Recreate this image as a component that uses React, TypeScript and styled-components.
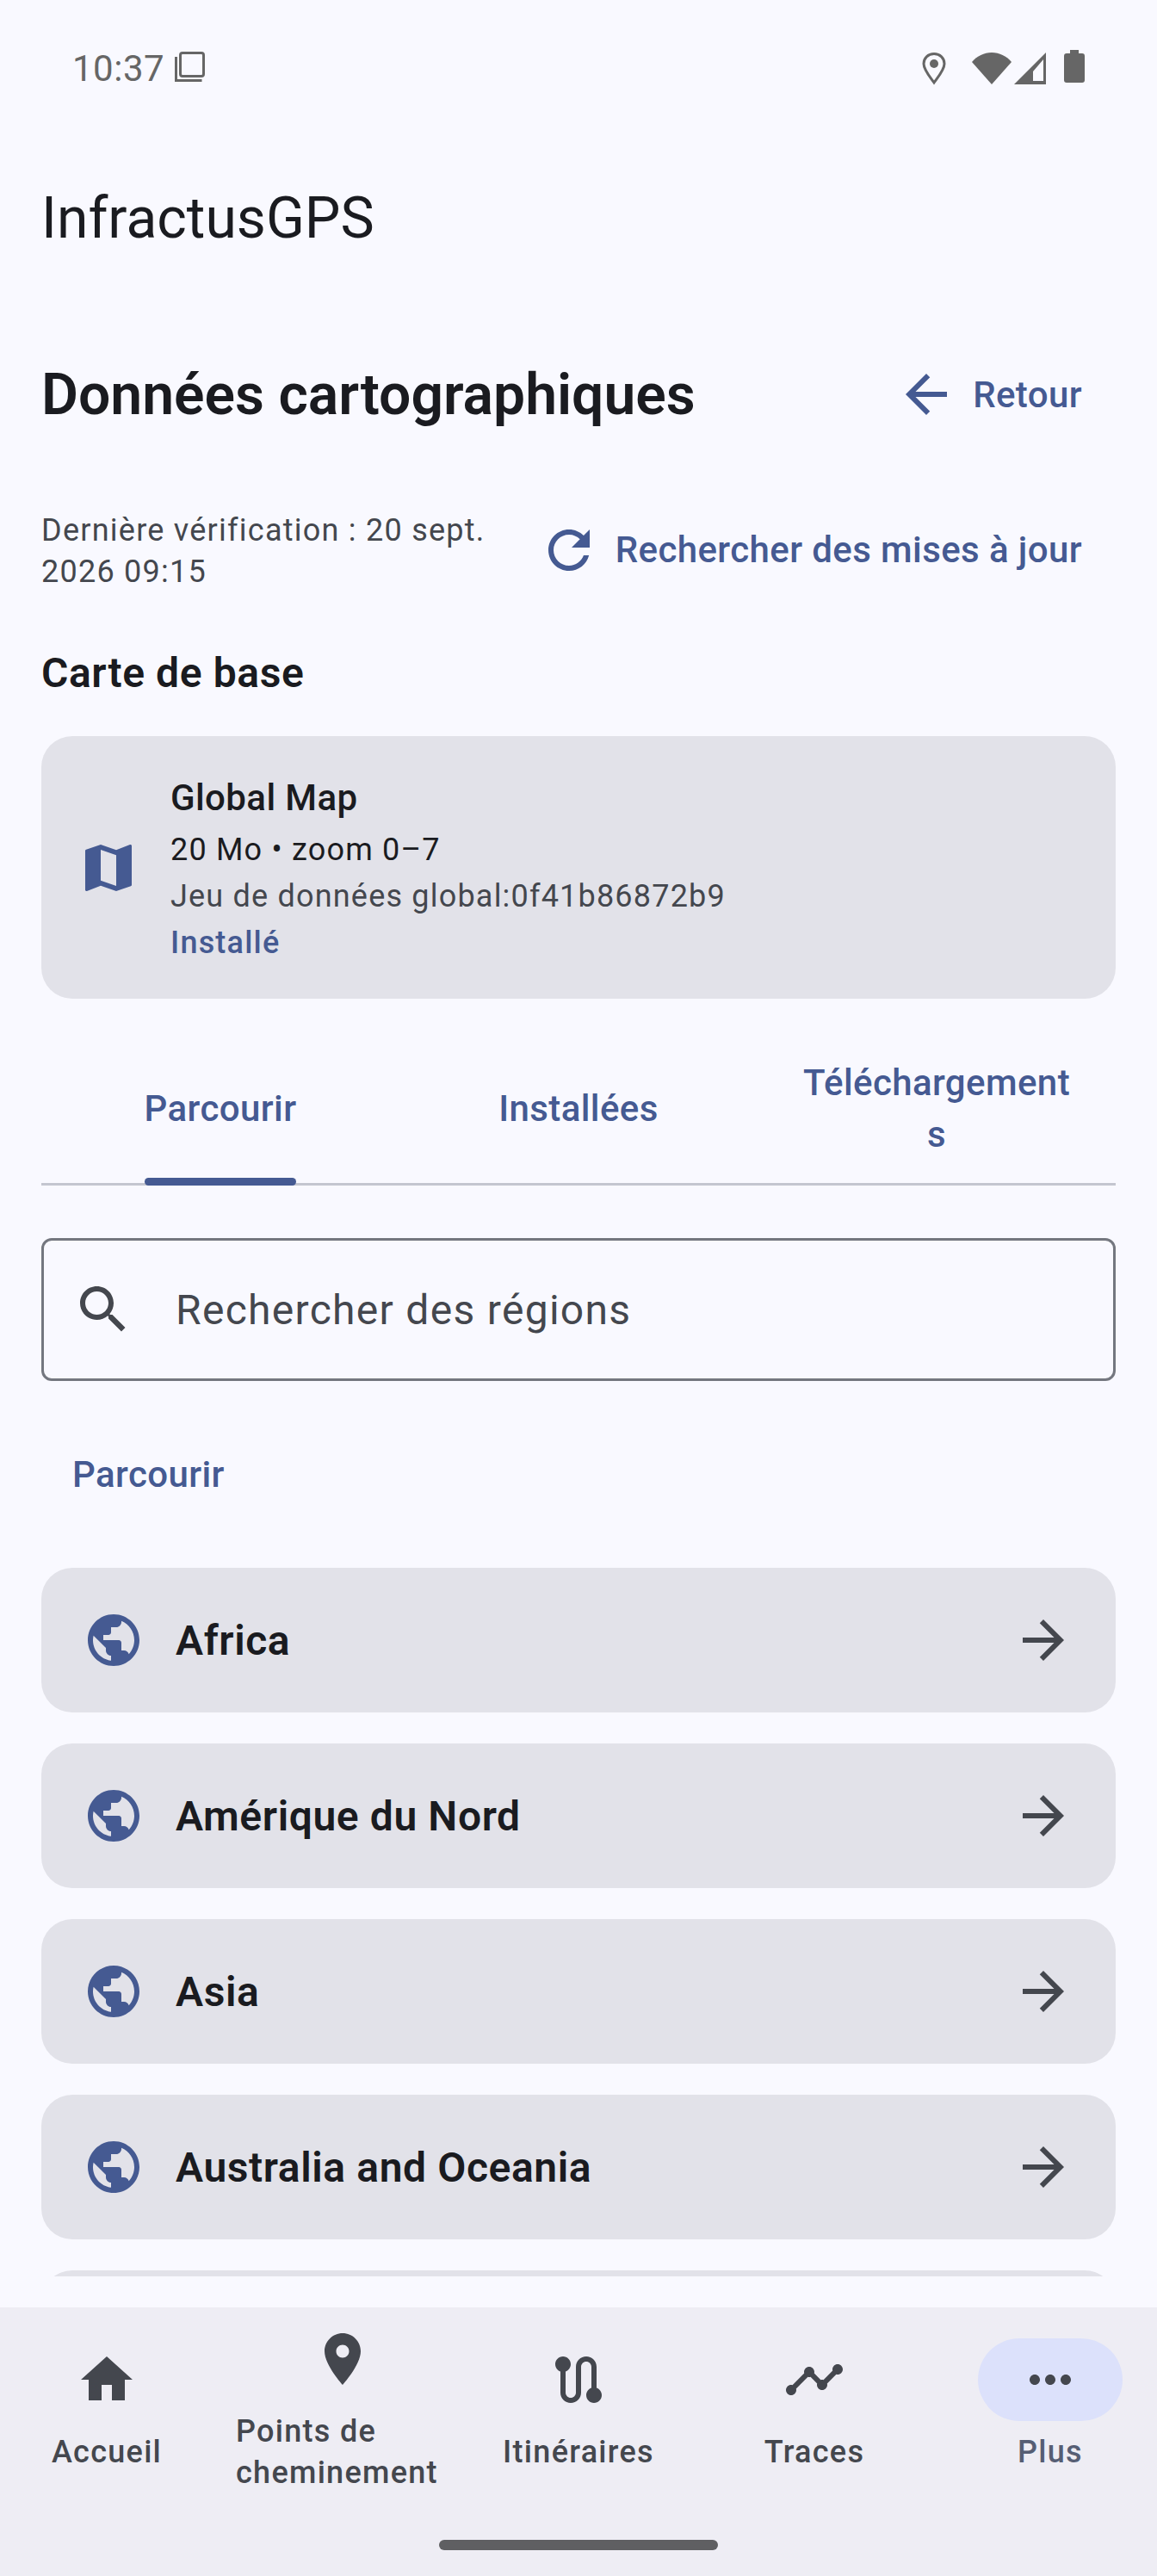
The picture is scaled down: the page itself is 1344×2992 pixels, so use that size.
import React from "react";
import styled, { createGlobalStyle } from "styled-components";

const PRIMARY = "#455a92";
const TEXT = "#1a1b20";
const MUTED = "#44474e";

const GlobalStyle = createGlobalStyle`
  html, body {
    margin: 0;
    padding: 0;
    background: #f9f9ff;
  }
  * {
    box-sizing: border-box;
  }
`;

const paths = {
  home: "M10 20v-6h4v6h5v-8h3L12 3 2 12h3v8z",
  place:
    "M12 2C8.13 2 5 5.13 5 9c0 5.25 7 13 7 13s7-7.75 7-13c0-3.87-3.13-7-7-7zm0 9.5c-1.38 0-2.5-1.12-2.5-2.5s1.12-2.5 2.5-2.5 2.5 1.12 2.5 2.5-1.12 2.5-2.5 2.5z",
  route:
    "M19 15.18V7c0-2.21-1.79-4-4-4s-4 1.79-4 4v10c0 1.1-.9 2-2 2s-2-.9-2-2V8.82C8.16 8.4 9 7.3 9 6c0-1.66-1.34-3-3-3S3 4.34 3 6c0 1.3.84 2.4 2 2.82V17c0 2.21 1.79 4 4 4s4-1.79 4-4V7c0-1.1.9-2 2-2s2 .9 2 2v8.18c-1.16.41-2 1.51-2 2.82 0 1.66 1.34 3 3 3s3-1.34 3-3c0-1.3-.84-2.4-2-2.82z",
  timeline:
    "M23 8c0 1.1-.9 2-2 2-.18 0-.35-.02-.51-.07l-3.56 3.55c.05.16.07.34.07.52 0 1.1-.9 2-2 2s-2-.9-2-2c0-.18.02-.36.07-.52l-2.55-2.55c-.16.05-.34.07-.52.07s-.36-.02-.52-.07l-4.55 4.56c.05.16.07.33.07.51 0 1.1-.9 2-2 2s-2-.9-2-2 .9-2 2-2c.18 0 .35.02.51.07l4.56-4.55C8.02 9.36 8 9.18 8 9c0-1.1.9-2 2-2s2 .9 2 2c0 .18-.02.36-.07.52l2.55 2.55c.16-.05.34-.07.52-.07s.36.02.52.07l3.55-3.56C19.02 8.35 19 8.18 19 8c0-1.1.9-2 2-2s2 .9 2 2z",
  more:
    "M6 10c-1.1 0-2 .9-2 2s.9 2 2 2 2-.9 2-2-.9-2-2-2zm12 0c-1.1 0-2 .9-2 2s.9 2 2 2 2-.9 2-2-.9-2-2-2zm-6 0c-1.1 0-2 .9-2 2s.9 2 2 2 2-.9 2-2-.9-2-2-2z",
  globe:
    "M12 2C6.48 2 2 6.48 2 12s4.48 10 10 10 10-4.48 10-10S17.52 2 12 2zm-1 17.93c-3.95-.49-7-3.85-7-7.93 0-.62.08-1.21.21-1.79L9 15v1c0 1.1.9 2 2 2v1.93zm6.9-2.54c-.26-.81-1-1.39-1.9-1.39h-1v-3c0-.55-.45-1-1-1H8v-2h2c.55 0 1-.45 1-1V7h2c1.1 0 2-.9 2-2v-.41c2.93 1.19 5 4.06 5 7.41 0 2.08-.8 3.97-2.1 5.39z",
  map: "M20.5 3l-.16.03L15 5.1 9 3 3.36 4.9c-.21.07-.36.25-.36.48V20.5c0 .28.22.5.5.5l.16-.03L9 18.9l6 2.1 5.64-1.9c.21-.07.36-.25.36-.48V3.5c0-.28-.22-.5-.5-.5zM15 19l-6-2.11V5l6 2.11V19z",
  search:
    "M15.5 14h-.79l-.28-.27C15.41 12.59 16 11.11 16 9.5 16 5.91 13.09 3 9.5 3S3 5.91 3 9.5 5.91 16 9.5 16c1.61 0 3.09-.59 4.23-1.57l.27.28v.79l5 4.99L20.49 19l-4.99-5zm-6 0C7.01 14 5 11.99 5 9.5S7.01 5 9.5 5 14 7.01 14 9.5 11.99 14 9.5 14z",
  back: "M20 11H7.83l5.59-5.59L12 4l-8 8 8 8 1.41-1.41L7.83 13H20v-2z",
  forward: "M12 4l-1.41 1.41L16.17 11H4v2h12.17l-5.58 5.59L12 20l8-8z",
  refresh:
    "M17.65 6.35C16.2 4.9 14.21 4 12 4c-4.42 0-7.99 3.58-7.99 8s3.57 8 7.99 8c3.73 0 6.84-2.55 7.73-6h-2.08c-.82 2.33-3.04 4-5.65 4-3.31 0-6-2.69-6-6s2.69-6 6-6c1.66 0 3.14.69 4.22 1.78L13 11h7V4l-2.35 2.35z",
};

const Icon = ({ name, size, color }: { name: keyof typeof paths; size: number; color: string }) => (
  <svg width={size} height={size} viewBox="0 0 24 24" fill={color} style={{ flexShrink: 0, display: "block" }}>
    <path d={paths[name]} />
  </svg>
);

const regions = ["Africa", "Amérique du Nord", "Asia", "Australia and Oceania"];

const navItems: { label: string; icon: keyof typeof paths; active?: boolean }[] = [
  { label: "Accueil", icon: "home" },
  { label: "Points de cheminement", icon: "place" },
  { label: "Itinéraires", icon: "route" },
  { label: "Traces", icon: "timeline" },
  { label: "Plus", icon: "more", active: true },
];

export default function App() {
  return (
    <Screen>
      <GlobalStyle />
      <StatusBar>
        <StatusLeft>
          <Clock>10:37</Clock>
          <svg width="42" height="42" viewBox="0 0 42 42" fill="none" stroke="#666" strokeWidth="3">
            <rect x="9.5" y="3.5" width="27" height="27" rx="2.5" />
            <path d="M4.5 8v27.5h30" />
          </svg>
        </StatusLeft>
        <StatusRight>
          <svg width="30" height="42" viewBox="0 0 30 42" fill="none">
            <path
              d="M15 4.500C8 4.500 3 9.500 3 16c0 7 7 15 12 22 5-7 12-15 12-22 0-6.500-5-11.500-12-11.500z"
              stroke="#666"
              strokeWidth="3"
            />
            <circle cx="15" cy="16" r="5" fill="#666" />
          </svg>
          <Wifi width="46" height="42" viewBox="0 0 46 42">
            <path d="M0 14C6 7 14 3 23 3s17 4 23 11L23 40z" fill="#666" />
          </Wifi>
          <Signal width="38" height="42" viewBox="0 0 38 42">
            <path fillRule="evenodd" d="M37 3v37H0zM22 25v11h12V11z" fill="#666" />
          </Signal>
          <Battery>
            <svg width="24" height="42" viewBox="0 0 24 42">
              <path d="M7 2h10v4h4a3 3 0 0 1 3 3v28a3 3 0 0 1-3 3H3a3 3 0 0 1-3-3V9a3 3 0 0 1 3-3h4z" fill="#666" />
            </svg>
          </Battery>
        </StatusRight>
      </StatusBar>
      <AppTitle>InfractusGPS</AppTitle>
      <Main>
        <Clip>
          <HeadingRow>
            <Heading>Données cartographiques</Heading>
            <TextAction>
              <Icon name="back" size={72} color={PRIMARY} />
              Retour
            </TextAction>
          </HeadingRow>
          <MetaRow>
            <MetaText>Dernière vérification : 20 sept. 2026 09:15</MetaText>
            <TextAction>
              <Icon name="refresh" size={72} color={PRIMARY} />
              Rechercher des mises à jour
            </TextAction>
          </MetaRow>
          <SectionTitle>Carte de base</SectionTitle>
          <BaseCard>
            <Icon name="map" size={72} color={PRIMARY} />
            <BaseInfo>
              <BaseName>Global Map</BaseName>
              <BaseLine>20 Mo • zoom 0–7</BaseLine>
              <BaseLine $muted>Jeu de données global:0f41b86872b9</BaseLine>
              <BaseStatus>Installé</BaseStatus>
            </BaseInfo>
          </BaseCard>
          <Tabs>
            <Tab>
              <TabLabel $active>Parcourir</TabLabel>
            </Tab>
            <Tab>
              <TabLabel>Installées</TabLabel>
            </Tab>
            <Tab>
              <TabLabel>Téléchargements</TabLabel>
            </Tab>
          </Tabs>
          <SearchField>
            <Icon name="search" size={72} color={MUTED} />
            <SearchText>Rechercher des régions</SearchText>
          </SearchField>
          <BrowseLabel>Parcourir</BrowseLabel>
          <RegionList>
            {regions.map((region) => (
              <RegionRow key={region}>
                <Icon name="globe" size={72} color={PRIMARY} />
                <RegionName>{region}</RegionName>
                <Icon name="forward" size={72} color={MUTED} />
              </RegionRow>
            ))}
            {/* next row, only its top edge shows above the nav */}
            <RegionRow />
          </RegionList>
        </Clip>
      </Main>
      <BottomNav>
        {navItems.map((item) => (
          <NavItem key={item.label}>
            <NavPill $active={item.active}>
              <Icon name={item.icon} size={72} color={MUTED} />
            </NavPill>
            <NavLabel $active={item.active}>{item.label}</NavLabel>
          </NavItem>
        ))}
        <HomeBar />
      </BottomNav>
    </Screen>
  );
}

const Screen = styled.div`
  width: 1344px;
  height: 2992px;
  display: flex;
  flex-direction: column;
  overflow: hidden;
  background: #f9f9ff;
  font-family: Roboto, "Noto Sans", sans-serif;
  color: ${TEXT};
`;

const StatusBar = styled.div`
  height: 158px;
  flex-shrink: 0;
  display: flex;
  align-items: center;
  justify-content: space-between;
  padding: 0 84px;
`;

const StatusLeft = styled.div`
  display: flex;
  align-items: center;
  gap: 9px;
`;

const Clock = styled.span`
  font-size: 42px;
  color: #666;
  letter-spacing: 0.5px;
`;

const StatusRight = styled.div`
  display: flex;
  align-items: center;
`;

const Wifi = styled.svg`
  margin-left: 29px;
`;

const Signal = styled.svg`
  margin-left: 3px;
`;

const Battery = styled.div`
  margin-left: 20px;
`;

const AppTitle = styled.div`
  height: 190px;
  flex-shrink: 0;
  padding-left: 48px;
  display: flex;
  align-items: center;
  font-size: 66px;
  color: ${TEXT};
`;

const Main = styled.div`
  flex: 1;
  min-height: 0;
  display: flex;
  padding: 0 48px 36px;
`;

const Clip = styled.div`
  flex: 1;
  min-width: 0;
  overflow: hidden;
`;

const HeadingRow = styled.div`
  margin-top: 62px;
  height: 96px;
  display: flex;
  align-items: center;
  justify-content: space-between;
  padding-right: 39px;
`;

const Heading = styled.h1`
  margin: 0;
  font-size: 66px;
  font-weight: 600;
  color: ${TEXT};
`;

const TextAction = styled.div`
  display: flex;
  align-items: center;
  gap: 18px;
  flex-shrink: 0;
  font-size: 42px;
  font-weight: 500;
  letter-spacing: 0.4px;
  color: ${PRIMARY};
`;

const MetaRow = styled.div`
  margin-top: 83px;
  display: flex;
  align-items: center;
  justify-content: space-between;
  padding-right: 39px;
`;

const MetaText = styled.div`
  width: 540px;
  padding-top: 3px;
  font-size: 36px;
  line-height: 48px;
  letter-spacing: 1.25px;
  color: ${MUTED};
`;

const SectionTitle = styled.h2`
  margin: 64px 0 0;
  font-size: 48px;
  line-height: 60px;
  font-weight: 600;
  letter-spacing: 0.6px;
  color: ${TEXT};
`;

const BaseCard = styled.div`
  margin-top: 43px;
  height: 305px;
  display: flex;
  align-items: center;
  gap: 36px;
  padding: 0 42px;
  border-radius: 36px;
  background: #e2e2e9;
`;

const BaseInfo = styled.div`
  display: flex;
  flex-direction: column;
  padding-top: 3px;
`;

const BaseName = styled.div`
  margin-bottom: 3px;
  font-size: 42px;
  line-height: 60px;
  font-weight: 500;
  letter-spacing: 0.4px;
  color: ${TEXT};
`;

const BaseLine = styled.div<{ $muted?: boolean }>`
  font-size: 36px;
  line-height: 54px;
  letter-spacing: 1.2px;
  color: ${(props) => (props.$muted ? MUTED : TEXT)};
`;

const BaseStatus = styled.div`
  font-size: 36px;
  line-height: 54px;
  font-weight: 500;
  letter-spacing: 1.2px;
  color: ${PRIMARY};
`;

const Tabs = styled.div`
  margin-top: 42px;
  display: grid;
  grid-template-columns: repeat(3, 1fr);
  border-bottom: 3px solid #c4c6d0;
`;

const Tab = styled.div`
  height: 172px;
  display: flex;
  align-items: center;
  justify-content: center;
  padding: 0 48px;
  text-align: center;
`;

const TabLabel = styled.span<{ $active?: boolean }>`
  position: relative;
  font-size: 42px;
  line-height: 60px;
  font-weight: 500;
  letter-spacing: 0.4px;
  color: ${PRIMARY};
  overflow-wrap: anywhere;

  ${(props) =>
    props.$active &&
    `
    &::after {
      content: "";
      position: absolute;
      left: 0;
      right: 0;
      bottom: -59px;
      height: 9px;
      border-radius: 5px;
      background: ${PRIMARY};
    }
  `}
`;

const SearchField = styled.div`
  margin-top: 61px;
  height: 166px;
  display: flex;
  align-items: center;
  gap: 48px;
  padding: 0 33px;
  border: 3px solid #74777f;
  border-radius: 12px;
`;

const SearchText = styled.span`
  font-size: 48px;
  letter-spacing: 1.3px;
  color: ${MUTED};
`;

const BrowseLabel = styled.div`
  margin-top: 79px;
  padding-left: 36px;
  font-size: 42px;
  line-height: 60px;
  font-weight: 500;
  letter-spacing: 0.4px;
  color: ${PRIMARY};
`;

const RegionList = styled.div`
  margin-top: 78px;
  display: flex;
  flex-direction: column;
  gap: 36px;
`;

const RegionRow = styled.div`
  height: 168px;
  flex-shrink: 0;
  display: flex;
  align-items: center;
  gap: 36px;
  padding: 0 48px;
  border-radius: 36px;
  background: #e2e2e9;
`;

const RegionName = styled.span`
  flex: 1;
  font-size: 48px;
  font-weight: 600;
  letter-spacing: 0.6px;
  color: ${TEXT};
`;

const BottomNav = styled.nav`
  position: relative;
  height: 312px;
  flex-shrink: 0;
  display: flex;
  align-items: center;
  justify-content: space-between;
  padding: 0 0 84px;
  background: #eeedf4;
`;

const NavItem = styled.div`
  width: 248px;
  display: flex;
  flex-direction: column;
  align-items: center;
  gap: 12px;
`;

const NavPill = styled.div<{ $active?: boolean }>`
  width: 168px;
  height: 96px;
  display: flex;
  align-items: center;
  justify-content: center;
  border-radius: 48px;
  background: ${(props) => (props.$active ? "#dce1fb" : "transparent")};
`;

const NavLabel = styled.span<{ $active?: boolean }>`
  font-size: 36px;
  line-height: 48px;
  font-weight: 500;
  letter-spacing: 1.3px;
  color: ${(props) => (props.$active ? "#565e74" : MUTED)};
`;

const HomeBar = styled.div`
  position: absolute;
  left: 510px;
  bottom: 30px;
  width: 324px;
  height: 12px;
  border-radius: 6px;
  background: #5f5f62;
`;
